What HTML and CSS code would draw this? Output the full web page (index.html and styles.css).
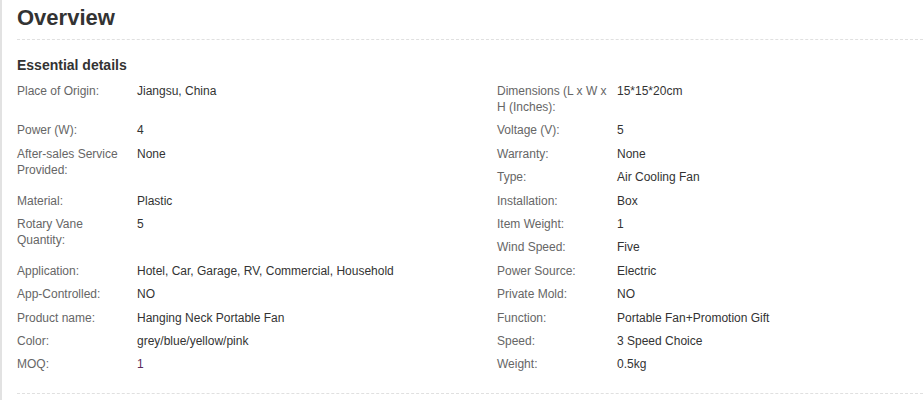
FILE: index.html
```html
<!DOCTYPE html>
<html>
<head>
    <link rel="stylesheet" href="styles.css">
</head>
<body>
    <div class="overview">
        <h1 class="overview-title">Overview</h1>
        <div class="details">
            <h2 class="details-title">Essential details</h2>
            <div class="entry-list">
                <div class="entry"><span class="entry-label">Place of Origin:</span><span class="entry-value">Jiangsu, China</span></div>
                <div class="entry"><span class="entry-label">Dimensions (L x W x H (Inches):</span><span class="entry-value">15*15*20cm</span></div>
                <div class="entry"><span class="entry-label">Power (W):</span><span class="entry-value">4</span></div>
                <div class="entry"><span class="entry-label">Voltage (V):</span><span class="entry-value">5</span></div>
                <div class="entry tall"><span class="entry-label">After-sales Service Provided:</span><span class="entry-value">None</span></div>
                <div class="entry"><span class="entry-label">Warranty:</span><span class="entry-value">None</span></div>
                <div class="entry"><span class="entry-label">Type:</span><span class="entry-value">Air Cooling Fan</span></div>
                <div class="entry"><span class="entry-label">Material:</span><span class="entry-value">Plastic</span></div>
                <div class="entry"><span class="entry-label">Installation:</span><span class="entry-value">Box</span></div>
                <div class="entry tall"><span class="entry-label">Rotary Vane Quantity:</span><span class="entry-value">5</span></div>
                <div class="entry"><span class="entry-label">Item Weight:</span><span class="entry-value">1</span></div>
                <div class="entry"><span class="entry-label">Wind Speed:</span><span class="entry-value">Five</span></div>
                <div class="entry"><span class="entry-label">Application:</span><span class="entry-value">Hotel, Car, Garage, RV, Commercial, Household</span></div>
                <div class="entry"><span class="entry-label">Power Source:</span><span class="entry-value">Electric</span></div>
                <div class="entry"><span class="entry-label">App-Controlled:</span><span class="entry-value">NO</span></div>
                <div class="entry"><span class="entry-label">Private Mold:</span><span class="entry-value">NO</span></div>
                <div class="entry"><span class="entry-label">Product name:</span><span class="entry-value">Hanging Neck Portable Fan</span></div>
                <div class="entry"><span class="entry-label">Function:</span><span class="entry-value">Portable Fan+Promotion Gift</span></div>
                <div class="entry"><span class="entry-label">Color:</span><span class="entry-value">grey/blue/yellow/pink</span></div>
                <div class="entry"><span class="entry-label">Speed:</span><span class="entry-value">3 Speed Choice</span></div>
                <div class="entry"><span class="entry-label">MOQ:</span><span class="entry-value moq">1</span></div>
                <div class="entry"><span class="entry-label">Weight:</span><span class="entry-value">0.5kg</span></div>
            </div>
        </div>
    </div>
</body>
</html>
```

FILE: styles.css
```css
body {
    margin: 0;
    font-family: Arial, "Liberation Sans", sans-serif;
    background: #fff;
    color: #333;
}

.overview {
    border-left: 2px solid #e2e2e2;
    padding-left: 15px;
    height: 400px;
    box-sizing: border-box;
}

.overview-title {
    margin: 0;
    padding: 4px 0 7px;
    font-size: 22px;
    line-height: 28px;
    font-weight: bold;
    color: #333;
    border-bottom: 1px dashed #e0e0e0;
}

.details {
    padding-bottom: 21px;
    border-bottom: 1px dashed #e0e0e0;
}

.details-title {
    margin: 15px 0 8px;
    font-size: 14px;
    line-height: 20px;
    font-weight: bold;
    color: #333;
}

.entry-list {
    display: grid;
    grid-template-columns: 480px 1fr;
    row-gap: 7.4px;
    font-size: 12px;
    line-height: 16px;
}

.entry {
    display: flex;
}

.entry.tall {
    grid-row: span 2;
}

.entry-label {
    width: 112px;
    flex-shrink: 0;
    padding-right: 8px;
    color: #666;
}

.entry-value {
    color: #333;
}

.entry-value.moq {
    color: #5a2a5a;
}
```
